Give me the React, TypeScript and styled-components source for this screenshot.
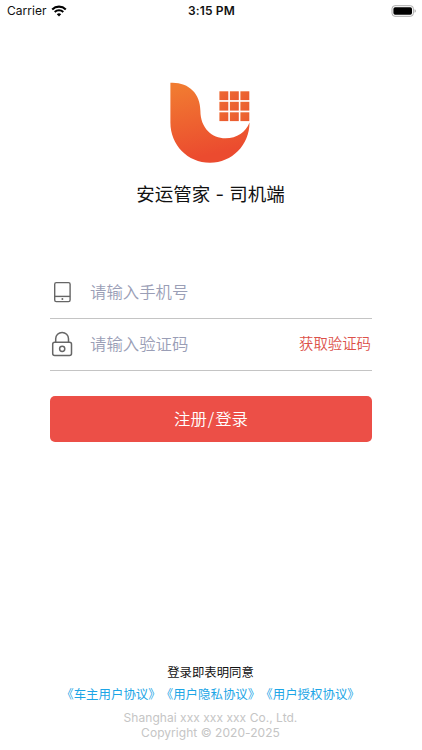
import React from "react";
import styled, { createGlobalStyle } from "styled-components";

const GlobalStyle = createGlobalStyle`
  * { box-sizing: border-box; }
  body {
    margin: 0;
    background: #fff;
    color: #111;
    font-family: Inter, "Noto Sans CJK SC", sans-serif;
    text-spacing-trim: space-all;
  }
`;

const Screen = styled.div`
  width: 422px;
  height: 750px;
  display: flex;
  flex-direction: column;
  overflow: hidden;
  background: #fff;
`;

const StatusBar = styled.header`
  height: 22px;
  padding: 0 6px 0 7px;
  display: grid;
  grid-template-columns: 1fr auto 1fr;
  align-items: center;
  font-size: 12px;
  line-height: 22px;
`;

const Carrier = styled.div`
  display: flex;
  align-items: center;
  gap: 4px;
  letter-spacing: 0.05px;
`;

const Clock = styled.div`
  font-weight: 600;
  letter-spacing: 0.15px;
`;

const BatterySlot = styled.div`
  display: flex;
  justify-content: flex-end;
`;

const Brand = styled.section`
  display: flex;
  flex-direction: column;
  align-items: center;
  padding: 60px 2px 0 0;
`;

const Title = styled.h1`
  margin: 17px 0 0 1px;
  font-size: 18.5px;
  font-weight: 400;
  line-height: 28px;
  white-space: pre;
`;

const Form = styled.form`
  margin: 59px 50px 0;
`;

const Field = styled.label`
  height: 52px;
  display: flex;
  align-items: center;
  padding-bottom: 2px;
  border-bottom: 1px solid #c4c4c4;
`;

const FieldIcon = styled.span`
  width: 40px;
  display: flex;
`;

const Input = styled.input`
  flex: 1;
  min-width: 0;
  height: 40px;
  padding: 0 0 2px;
  border: 0;
  outline: 0;
  background: transparent;
  font: 350 16.4px/38px "Noto Sans CJK SC", sans-serif;
  &::placeholder { color: #9a9eb6; opacity: 1; }
`;

const CodeButton = styled.button`
  margin-right: 1px;
  padding: 0 0 2px;
  border: 0;
  background: none;
  color: #dc5149;
  font: 350 14.4px/24px "Noto Sans CJK SC", sans-serif;
`;

const SubmitButton = styled.button`
  width: 100%;
  height: 46px;
  margin-top: 25px;
  padding: 0 0 2px;
  border: 0;
  border-radius: 5px;
  background: #ec4f47;
  color: #fff;
  font: 350 16.4px/44px "Noto Sans CJK SC", sans-serif;
`;

const Slash = styled.span`
  margin: 0 1px;
`;

const Footer = styled.footer`
  margin-top: auto;
  padding: 0 1px 10px 0;
  text-align: center;
`;

const Consent = styled.div`
  font-size: 12.4px;
  line-height: 20px;
`;

const Agreements = styled.nav`
  display: flex;
  justify-content: center;
  margin: 1px 0 7px;
`;

const Agreement = styled.a`
  color: #1ca5e6;
  font: 400 12.45px/20px "Noto Sans CJK SC", sans-serif;
`;

const Legal = styled.div`
  color: #c5c5c5;
  font-size: 12px;
  line-height: 14.5px;
  letter-spacing: 0.04px;
`;

const WifiIcon = () => (
  <svg width="16" height="12" viewBox="0 0 16 12" fill="none" stroke="#000">
    <path d="M1.2 4.4a9.8 9.8 0 0 1 13.6 0" strokeWidth="2.1" />
    <path d="M3.7 7a6.2 6.2 0 0 1 8.6 0" strokeWidth="2" />
    <path d="M5.8 9.2a3.2 3.2 0 0 1 4.4 0L8 11.5Z" fill="#000" stroke="none" />
  </svg>
);

const BatteryIcon = () => (
  <svg width="26" height="12" viewBox="0 0 26 12">
    <rect x="2" y="0.7" width="21.4" height="10.6" rx="3" fill="#fff" stroke="#aaa" />
    <rect x="3.4" y="2.2" width="18.6" height="7.6" rx="1.7" fill="#000" />
    <path d="M24.6 4.2c1.5.5 1.5 3.1 0 3.6Z" fill="#999" />
  </svg>
);

const tiles = [0, 10.5, 21];

const Logo = () => (
  <svg width="80" height="81" viewBox="0 0 80 81">
    <defs>
      <linearGradient id="swoosh" x1="0.3" y1="0" x2="0.5" y2="0.9">
        <stop offset="0" stopColor="#f17b31" />
        <stop offset="1" stopColor="#eb4b2f" />
      </linearGradient>
      <linearGradient id="tile" x1="0" y1="0" x2="1" y2="1">
        <stop offset="0" stopColor="#ed6932" />
        <stop offset="1" stopColor="#ea5a30" />
      </linearGradient>
    </defs>
    <path
      d="M.4 .8C18-.2 30.4 11 30.4 29C30.4 46 42 56.3 55.5 56.3C67 56.3 75.8 50 79.5 40.5C79.5 63 62 80.7 40 80.7C17.5 80.7 .4 63 .4 40.5Z"
      fill="url(#swoosh)"
    />
    {tiles.map((y) =>
      tiles.map((x) => (
        <rect key={`${x}-${y}`} x={49.4 + x} y={9.3 + y} width="8.9" height="8.8" fill="url(#tile)" />
      ))
    )}
  </svg>
);

const PhoneIcon = () => (
  <svg width="25" height="24" viewBox="0 0 25 24" fill="none" stroke="#666" strokeWidth="1.4">
    <rect x="4.7" y="2.6" width="15.4" height="19" rx="1.6" />
    <path d="M4.7 16.4h15.4" />
    <circle cx="12.4" cy="19" r="1" fill="#666" stroke="none" />
  </svg>
);

const LockIcon = () => (
  <svg width="25" height="26" viewBox="0 0 25 26" fill="none" stroke="#666" strokeWidth="1.5">
    <rect x="2.7" y="11.2" width="18.8" height="13.2" rx="2" />
    <path d="M5.7 11.2V7.8a6.4 6.4 0 0 1 12.8 0v3.4" />
    <circle cx="12.2" cy="17.8" r="2.6" />
  </svg>
);

const agreements = ["《车主用户协议》", "《用户隐私协议》", "《用户授权协议》"];

export default function App() {
  return (
    <Screen>
      <GlobalStyle />
      <StatusBar>
        <Carrier>
          Carrier
          <WifiIcon />
        </Carrier>
        <Clock>3:15 PM</Clock>
        <BatterySlot>
          <BatteryIcon />
        </BatterySlot>
      </StatusBar>
      <Brand>
        <Logo />
        <Title>安运管家 - 司机端</Title>
      </Brand>
      <Form>
        <Field>
          <FieldIcon><PhoneIcon /></FieldIcon>
          <Input placeholder="请输入手机号" />
        </Field>
        <Field>
          <FieldIcon><LockIcon /></FieldIcon>
          <Input placeholder="请输入验证码" />
          <CodeButton type="button">获取验证码</CodeButton>
        </Field>
        <SubmitButton type="button">注册<Slash>/</Slash>登录</SubmitButton>
      </Form>
      <Footer>
        <Consent>登录即表明同意</Consent>
        <Agreements>
          {agreements.map((name) => (
            <Agreement key={name}>{name}</Agreement>
          ))}
        </Agreements>
        <Legal>Shanghai xxx xxx xxx Co., Ltd.</Legal>
        <Legal>Copyright © 2020-2025</Legal>
      </Footer>
    </Screen>
  );
}
